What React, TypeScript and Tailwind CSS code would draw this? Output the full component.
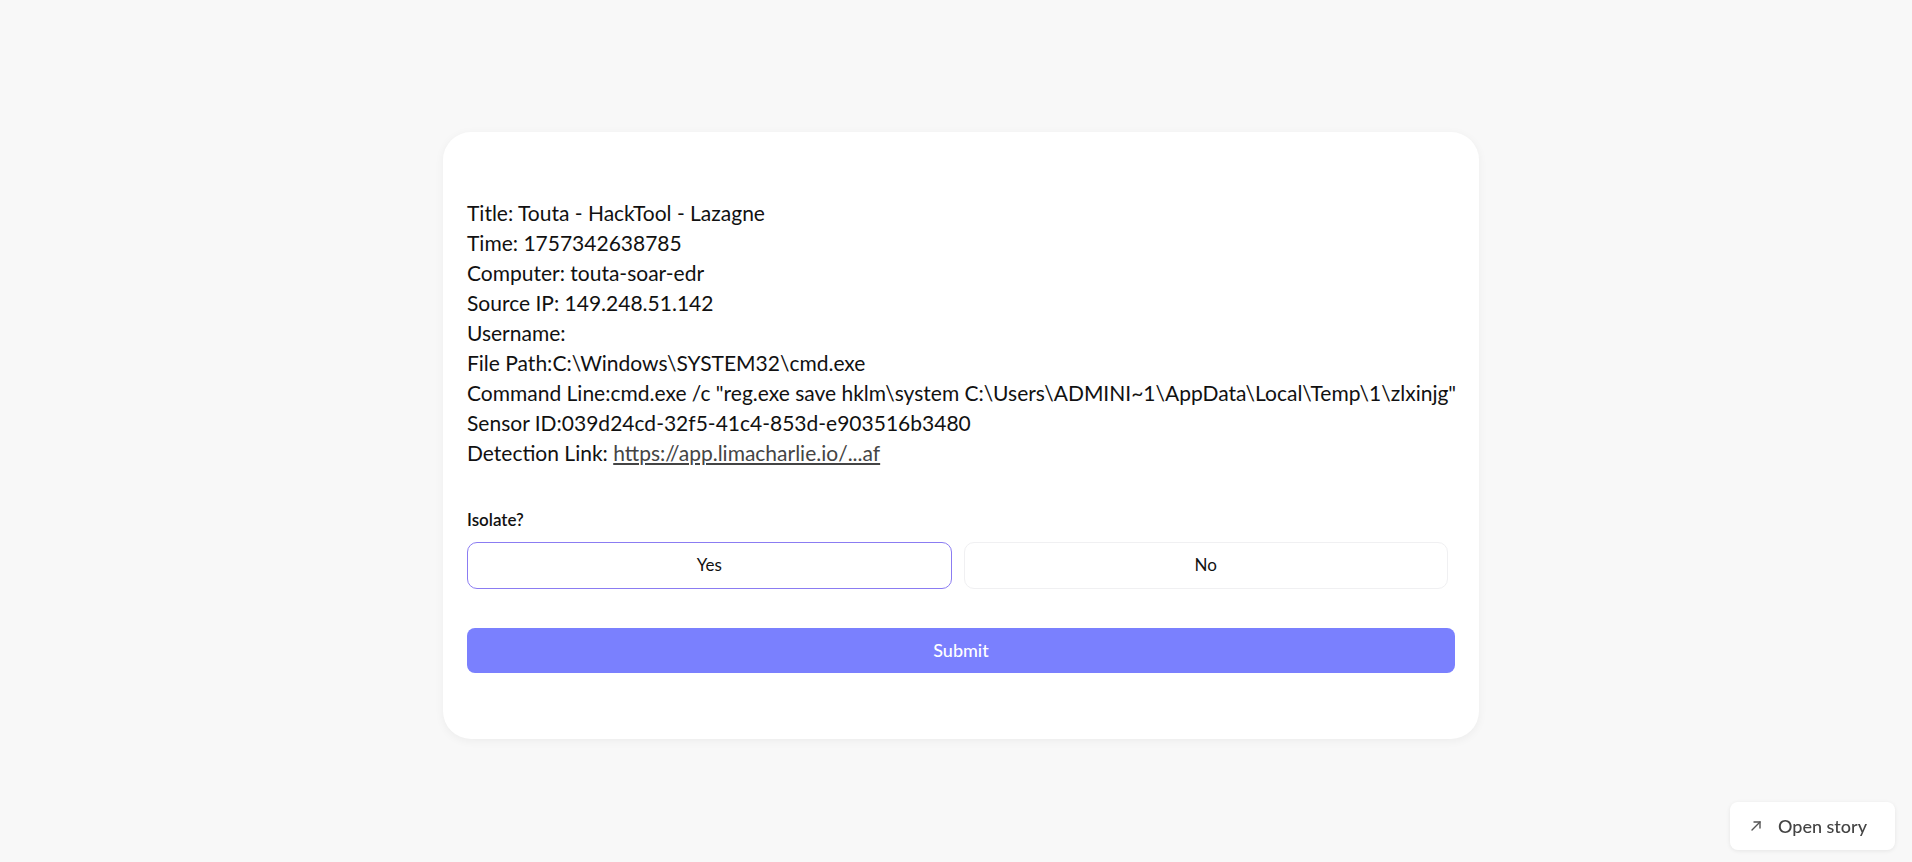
import React, { useState } from 'react';

const details = [
  { label: 'Title: ', value: 'Touta - HackTool - Lazagne' },
  { label: 'Time: ', value: '1757342638785' },
  { label: 'Computer: ', value: 'touta-soar-edr' },
  { label: 'Source IP: ', value: '149.248.51.142' },
  { label: 'Username: ', value: '' },
  { label: 'File Path:', value: 'C:\\Windows\\SYSTEM32\\cmd.exe' },
  { label: 'Command Line:', value: 'cmd.exe /c "reg.exe save hklm\\system C:\\Users\\ADMINI~1\\AppData\\Local\\Temp\\1\\zlxinjg"' },
  { label: 'Sensor ID:', value: '039d24cd-32f5-41c4-853d-e903516b3480' },
];

export default function App() {
  const [isolate, setIsolate] = useState<'yes' | 'no'>('yes');

  return (
    <div className="min-h-screen bg-[#f8f8f8] flex items-center justify-center pl-[10px] pt-[8px] font-['Lato',sans-serif]">
      {/* Detection card */}
      <div className="w-[1036px] bg-white rounded-[28px] shadow-[0_2px_10px_rgba(0,0,0,0.05)] px-6 pt-[66px] pb-[66px]">
        <div className="text-[21px] leading-[30px] text-[#111] whitespace-nowrap">
          {details.map((d) => (
            <div key={d.label}>
              {d.label}
              {d.value}
            </div>
          ))}
          <div>
            Detection Link:{' '}
            <a href="#" className="underline text-[#444] underline-offset-2">
              https://app.limacharlie.io/...af
            </a>
          </div>
        </div>

        <div className="mt-[42px] text-[17px] leading-[20px] font-semibold text-[#111]">Isolate?</div>

        <div className="mt-3 pr-[7px] grid grid-cols-2 gap-3">
          <button
            onClick={() => setIsolate('yes')}
            className={`h-[47px] rounded-[10px] bg-white text-[17px] text-[#111] border ${
              isolate === 'yes' ? 'border-[#8b7cf2]' : 'border-[#f0f0f2]'
            }`}
          >
            Yes
          </button>
          <button
            onClick={() => setIsolate('no')}
            className={`h-[47px] rounded-[10px] bg-white text-[17px] text-[#111] border ${
              isolate === 'no' ? 'border-[#8b7cf2]' : 'border-[#f0f0f2]'
            }`}
          >
            No
          </button>
        </div>

        <button className="mt-[39px] w-full h-[45px] rounded-[8px] bg-[#7a80fe] text-white text-[18px] font-medium">
          Submit
        </button>
      </div>

      {/* Storybook-ish floating button */}
      <button className="fixed right-[17px] bottom-[12px] w-[165px] h-[48px] bg-white rounded-[8px] shadow-[0_1px_4px_rgba(0,0,0,0.08)] flex items-center pl-5 gap-4 text-[18px] font-medium text-[#444] font-['Lato',sans-serif]">
        <svg width="12" height="12" viewBox="0 0 12 12" fill="none" stroke="#555" strokeWidth="1.4" strokeLinecap="round">
          <path d="M2 10 L10 2" />
          <path d="M4 2 H10 V8" />
        </svg>
        Open story
      </button>
    </div>
  );
}
